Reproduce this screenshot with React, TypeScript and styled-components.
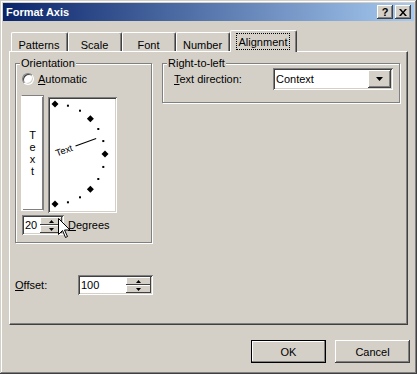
import styled, { createGlobalStyle } from "styled-components";

const GlobalStyle = createGlobalStyle`
  body {
    margin: 0;
    background: #d4d0c8;
  }
  * {
    box-sizing: border-box;
  }
`;

const raised = `
  box-shadow: inset -1px -1px #404040, inset 1px 1px #fff,
    inset -2px -2px #808080, inset 2px 2px #d4d0c8;
`;

const sunken = `
  box-shadow: inset 1px 1px #808080, inset -1px -1px #fff,
    inset 2px 2px #404040, inset -2px -2px #d4d0c8;
`;

const Window = styled.div`
	width: 417px;
	height: 374px;
	padding: 3px;
	background: #d4d0c8;
	box-shadow: inset -1px -1px #404040, inset 1px 1px #d4d0c8,
		inset -2px -2px #808080, inset 2px 2px #fff;
	font-family: "Liberation Sans", Arial, sans-serif;
	font-size: 11px;
	color: #000;
	display: flex;
	flex-direction: column;
`;

const TitleBar = styled.div`
	height: 18px;
	display: flex;
	align-items: center;
	padding: 0 3px 0 3px;
	background: linear-gradient(to right, #0a246a, #a6caf0);
`;

const TitleText = styled.span`
	flex: 1;
	color: #fff;
	font-weight: 700;
	font-size: 11px;
`;

const CaptionButton = styled.div`
	width: 16px;
	height: 14px;
	margin-left: 2px;
	background: #d4d0c8;
	display: flex;
	align-items: center;
	justify-content: center;
	font-weight: 700;
	font-size: 11px;
	line-height: 14px;
	${raised}
`;

const Body = styled.div`
	padding: 9px 5px 0 6px;
	display: flex;
	flex-direction: column;
`;

const TabStrip = styled.div`
	height: 21px;
	display: flex;
	align-items: flex-end;
	padding-left: 2px;
`;

const Tab = styled.div<{ $width: number; $active?: boolean }>`
	width: ${(p) => p.$width}px;
	height: ${(p) => (p.$active ? 22 : 19)}px;
	margin-bottom: ${(p) => (p.$active ? -1 : 0)}px;
	position: relative;
	z-index: ${(p) => (p.$active ? 1 : 0)};
	background: #d4d0c8;
	border-top: 1px solid #fff;
	border-left: 1px solid #fff;
	border-right: 1px solid #404040;
	border-radius: 2px 2px 0 0;
	box-shadow: inset -1px 0 #808080;
	display: flex;
	justify-content: center;
	padding-top: ${(p) => (p.$active ? 2 : 2)}px;
	padding-right: 1px;
`;

const FocusLabel = styled.span`
	height: 17px;
	padding: 1px 2px 0;
	border: 1px dotted #000;
	line-height: 14px;
`;

const TabLabel = styled.span`
	padding-top: 3px;
	line-height: 14px;
`;

const Panel = styled.div`
	width: 399px;
	height: 274px;
	border-top: 1px solid #fff;
	border-left: 1px solid #fff;
	border-right: 1px solid #404040;
	border-bottom: 1px solid #404040;
	box-shadow: inset -1px -1px #808080;
	padding: 11px 0 0 5px;
	display: flex;
	flex-direction: column;
`;

const GroupRow = styled.div`
	display: flex;
	align-items: flex-start;
	gap: 10px;
`;

const GroupBox = styled.div<{ $width: number; $height: number }>`
	position: relative;
	width: ${(p) => p.$width}px;
	height: ${(p) => p.$height}px;
	border: 1px solid #808080;
	box-shadow: inset 1px 1px #fff, 1px 1px #fff;
	display: flex;
	flex-direction: column;
`;

const Legend = styled.span`
	position: absolute;
	top: -7px;
	left: 4px;
	padding: 0 1px;
	background: #d4d0c8;
	line-height: 13px;
`;

const RadioRow = styled.label`
	display: flex;
	align-items: center;
	gap: 4px;
	margin: 9px 0 0 6px;
	line-height: 12px;
`;

const RadioCircle = styled.span`
	width: 12px;
	height: 12px;
	border-radius: 50%;
	background: #fff;
	border: 1px solid;
	border-color: #808080 #fff #fff #808080;
	box-shadow: inset 1px 1px #404040, inset -1px -1px #d4d0c8;
`;

const PreviewRow = styled.div`
	display: flex;
	align-items: flex-start;
	gap: 4px;
	margin: 10px 0 0 5px;
`;

const VerticalTextBox = styled.div`
	width: 23px;
	height: 116px;
	background: #fff;
	border: 1px solid;
	border-color: #808080 #808080 #fff #fff;
	box-shadow: inset 1px 1px #fff, inset -1px -1px #808080;
	display: flex;
	flex-direction: column;
	align-items: center;
	justify-content: center;
`;

const Letter = styled.span`
	line-height: 12px;
	font-size: 11px;
`;

const DialBox = styled.div`
	width: 69px;
	height: 116px;
	margin-top: 2px;
	padding: 2px;
	background: #fff;
	${sunken}
`;

const SpinRow = styled.div<{ $left: number; $top: number }>`
	position: relative;
	display: flex;
	align-items: center;
	margin: ${(p) => p.$top}px 0 0 ${(p) => p.$left}px;
`;

const FieldLabel = styled.span<{ $width?: number }>`
	width: ${(p) => (p.$width ? `${p.$width}px` : "auto")};
	line-height: 13px;
`;

const SpinBox = styled.div<{ $width: number }>`
	width: ${(p) => p.$width}px;
	height: 20px;
	background: #fff;
	padding: 2px;
	display: flex;
	${sunken}
`;

const SpinValue = styled.span`
	flex: 1;
	padding-left: 1px;
	line-height: 16px;
`;

const SpinButtons = styled.div<{ $width: number }>`
	width: ${(p) => p.$width}px;
	display: flex;
	flex-direction: column;
`;

const SpinButton = styled.div`
	flex: 1;
	background: #d4d0c8;
	display: flex;
	align-items: center;
	justify-content: center;
	box-shadow: inset -1px -1px #404040, inset 1px 1px #fff;
`;

const Cursor = styled.svg`
	position: absolute;
	left: 36px;
	top: 3px;
	z-index: 2;
`;

const ComboBox = styled.div`
	width: 120px;
	height: 22px;
	padding: 2px;
	background: #fff;
	display: flex;
	${sunken}
`;

const ComboText = styled.span`
	flex: 1;
	line-height: 18px;
	padding-left: 1px;
`;

const ComboButton = styled.div`
	width: 23px;
	background: #d4d0c8;
	display: flex;
	align-items: center;
	justify-content: center;
	${raised}
`;

const Footer = styled.div`
	display: flex;
	justify-content: flex-end;
	gap: 9px;
	margin: 15px -1px 0 0;
`;

const PushButton = styled.button<{ $default?: boolean }>`
	width: 75px;
	height: 23px;
	padding: 0;
	font: inherit;
	color: #000;
	background: #d4d0c8;
	border: ${(p) => (p.$default ? "1px solid #000" : "none")};
	${(p) =>
		p.$default
			? `box-shadow: inset -1px -1px #808080, inset 1px 1px #fff;`
			: raised}
`;

function Arrow({ up, w = 7 }: { up?: boolean; w?: number }) {
	const h = Math.ceil(w / 2);
	return (
		<svg width={w} height={h} viewBox={`0 0 ${w} ${h}`}>
			<polygon
				points={up ? `0,${h} ${w},${h} ${w / 2},0` : `0,0 ${w},0 ${w / 2},${h}`}
				fill="#000"
			/>
		</svg>
	);
}

function Dial() {
	const cx = 5;
	const cy = 55;
	const r = 50;
	const marks = [];
	for (let a = -90; a <= 90; a += 15) {
		const rad = (a * Math.PI) / 180;
		const x = cx + r * Math.cos(rad);
		const y = cy - r * Math.sin(rad);
		if (a % 45 === 0) {
			marks.push(
				<polygon
					key={a}
					points={`${x},${y - 3.5} ${x + 3.5},${y} ${x},${y + 3.5} ${x - 3.5},${y}`}
					fill="#000"
				/>
			);
		} else {
			marks.push(<rect key={a} x={x - 1} y={y - 1} width={2} height={2} fill="#000" />);
		}
	}
	return (
		<svg width={65} height={112} viewBox="0 0 65 112">
			{marks}
			<g transform={`rotate(-20 ${cx} ${cy})`}>
				<text
					x={cx + 1}
					y={cy + 3}
					fontSize={9.5}
					fontFamily="'Liberation Sans', Arial, sans-serif"
				>
					Text
				</text>
				<line x1={cx + 22} y1={cy - 0.5} x2={cx + 44} y2={cy - 0.5} stroke="#000" />
			</g>
		</svg>
	);
}

export default function App() {
	return (
		<>
			<GlobalStyle />
			<Window>
				<TitleBar>
					<TitleText>Format Axis</TitleText>
					<CaptionButton>?</CaptionButton>
					<CaptionButton>
						<svg width={8} height={7} viewBox="0 0 8 7">
							<path d="M0 0h2l2 2.5L6 0h2L5 3.5 8 7H6L4 4.5 2 7H0l3-3.5z" fill="#000" />
						</svg>
					</CaptionButton>
				</TitleBar>
				<Body>
					<TabStrip>
						<Tab $width={57}>
							<TabLabel>Patterns</TabLabel>
						</Tab>
						<Tab $width={54}>
							<TabLabel>Scale</TabLabel>
						</Tab>
						<Tab $width={54}>
							<TabLabel>Font</TabLabel>
						</Tab>
						<Tab $width={54}>
							<TabLabel>Number</TabLabel>
						</Tab>
						<Tab $width={67} $active>
							<FocusLabel>Alignment</FocusLabel>
						</Tab>
					</TabStrip>
					<Panel>
						<GroupRow>
							<GroupBox $width={137} $height={180}>
								<Legend>Orientation</Legend>
								<RadioRow>
									<RadioCircle />
									<span>
										<u>A</u>utomatic
									</span>
								</RadioRow>
								<PreviewRow>
									<VerticalTextBox>
										<Letter>T</Letter>
										<Letter>e</Letter>
										<Letter>x</Letter>
										<Letter>t</Letter>
									</VerticalTextBox>
									<DialBox>
										<Dial />
									</DialBox>
								</PreviewRow>
								<SpinRow $left={6} $top={2}>
									<SpinBox $width={42}>
										<SpinValue>20</SpinValue>
										<SpinButtons $width={22}>
											<SpinButton>
												<Arrow up w={5} />
											</SpinButton>
											<SpinButton>
												<Arrow w={5} />
											</SpinButton>
										</SpinButtons>
									</SpinBox>
									<FieldLabel style={{ marginLeft: 4 }}>
										<u>D</u>egrees
									</FieldLabel>
									<Cursor width={12} height={20} viewBox="0 0 12 20">
										<path
											d="M0.5 0.5v16l4-4 3 7 2-1-3-6.5h5.5z"
											fill="#fff"
											stroke="#000"
											strokeLinejoin="miter"
										/>
									</Cursor>
								</SpinRow>
							</GroupBox>
							<GroupBox $width={238} $height={40}>
								<Legend>Right-to-left</Legend>
								<SpinRow $left={11} $top={4}>
									<FieldLabel $width={99}>
										<u>T</u>ext direction:
									</FieldLabel>
									<ComboBox>
										<ComboText>Context</ComboText>
										<ComboButton>
											<Arrow />
										</ComboButton>
									</ComboBox>
								</SpinRow>
							</GroupBox>
						</GroupRow>
						<SpinRow $left={0} $top={32}>
							<FieldLabel $width={63}>
								<u>O</u>ffset:
							</FieldLabel>
							<SpinBox $width={75}>
								<SpinValue>100</SpinValue>
								<SpinButtons $width={25}>
									<SpinButton>
										<Arrow up w={5} />
									</SpinButton>
									<SpinButton>
										<Arrow w={5} />
									</SpinButton>
								</SpinButtons>
							</SpinBox>
						</SpinRow>
					</Panel>
					<Footer>
						<PushButton $default>OK</PushButton>
						<PushButton>Cancel</PushButton>
					</Footer>
				</Body>
			</Window>
		</>
	);
}
